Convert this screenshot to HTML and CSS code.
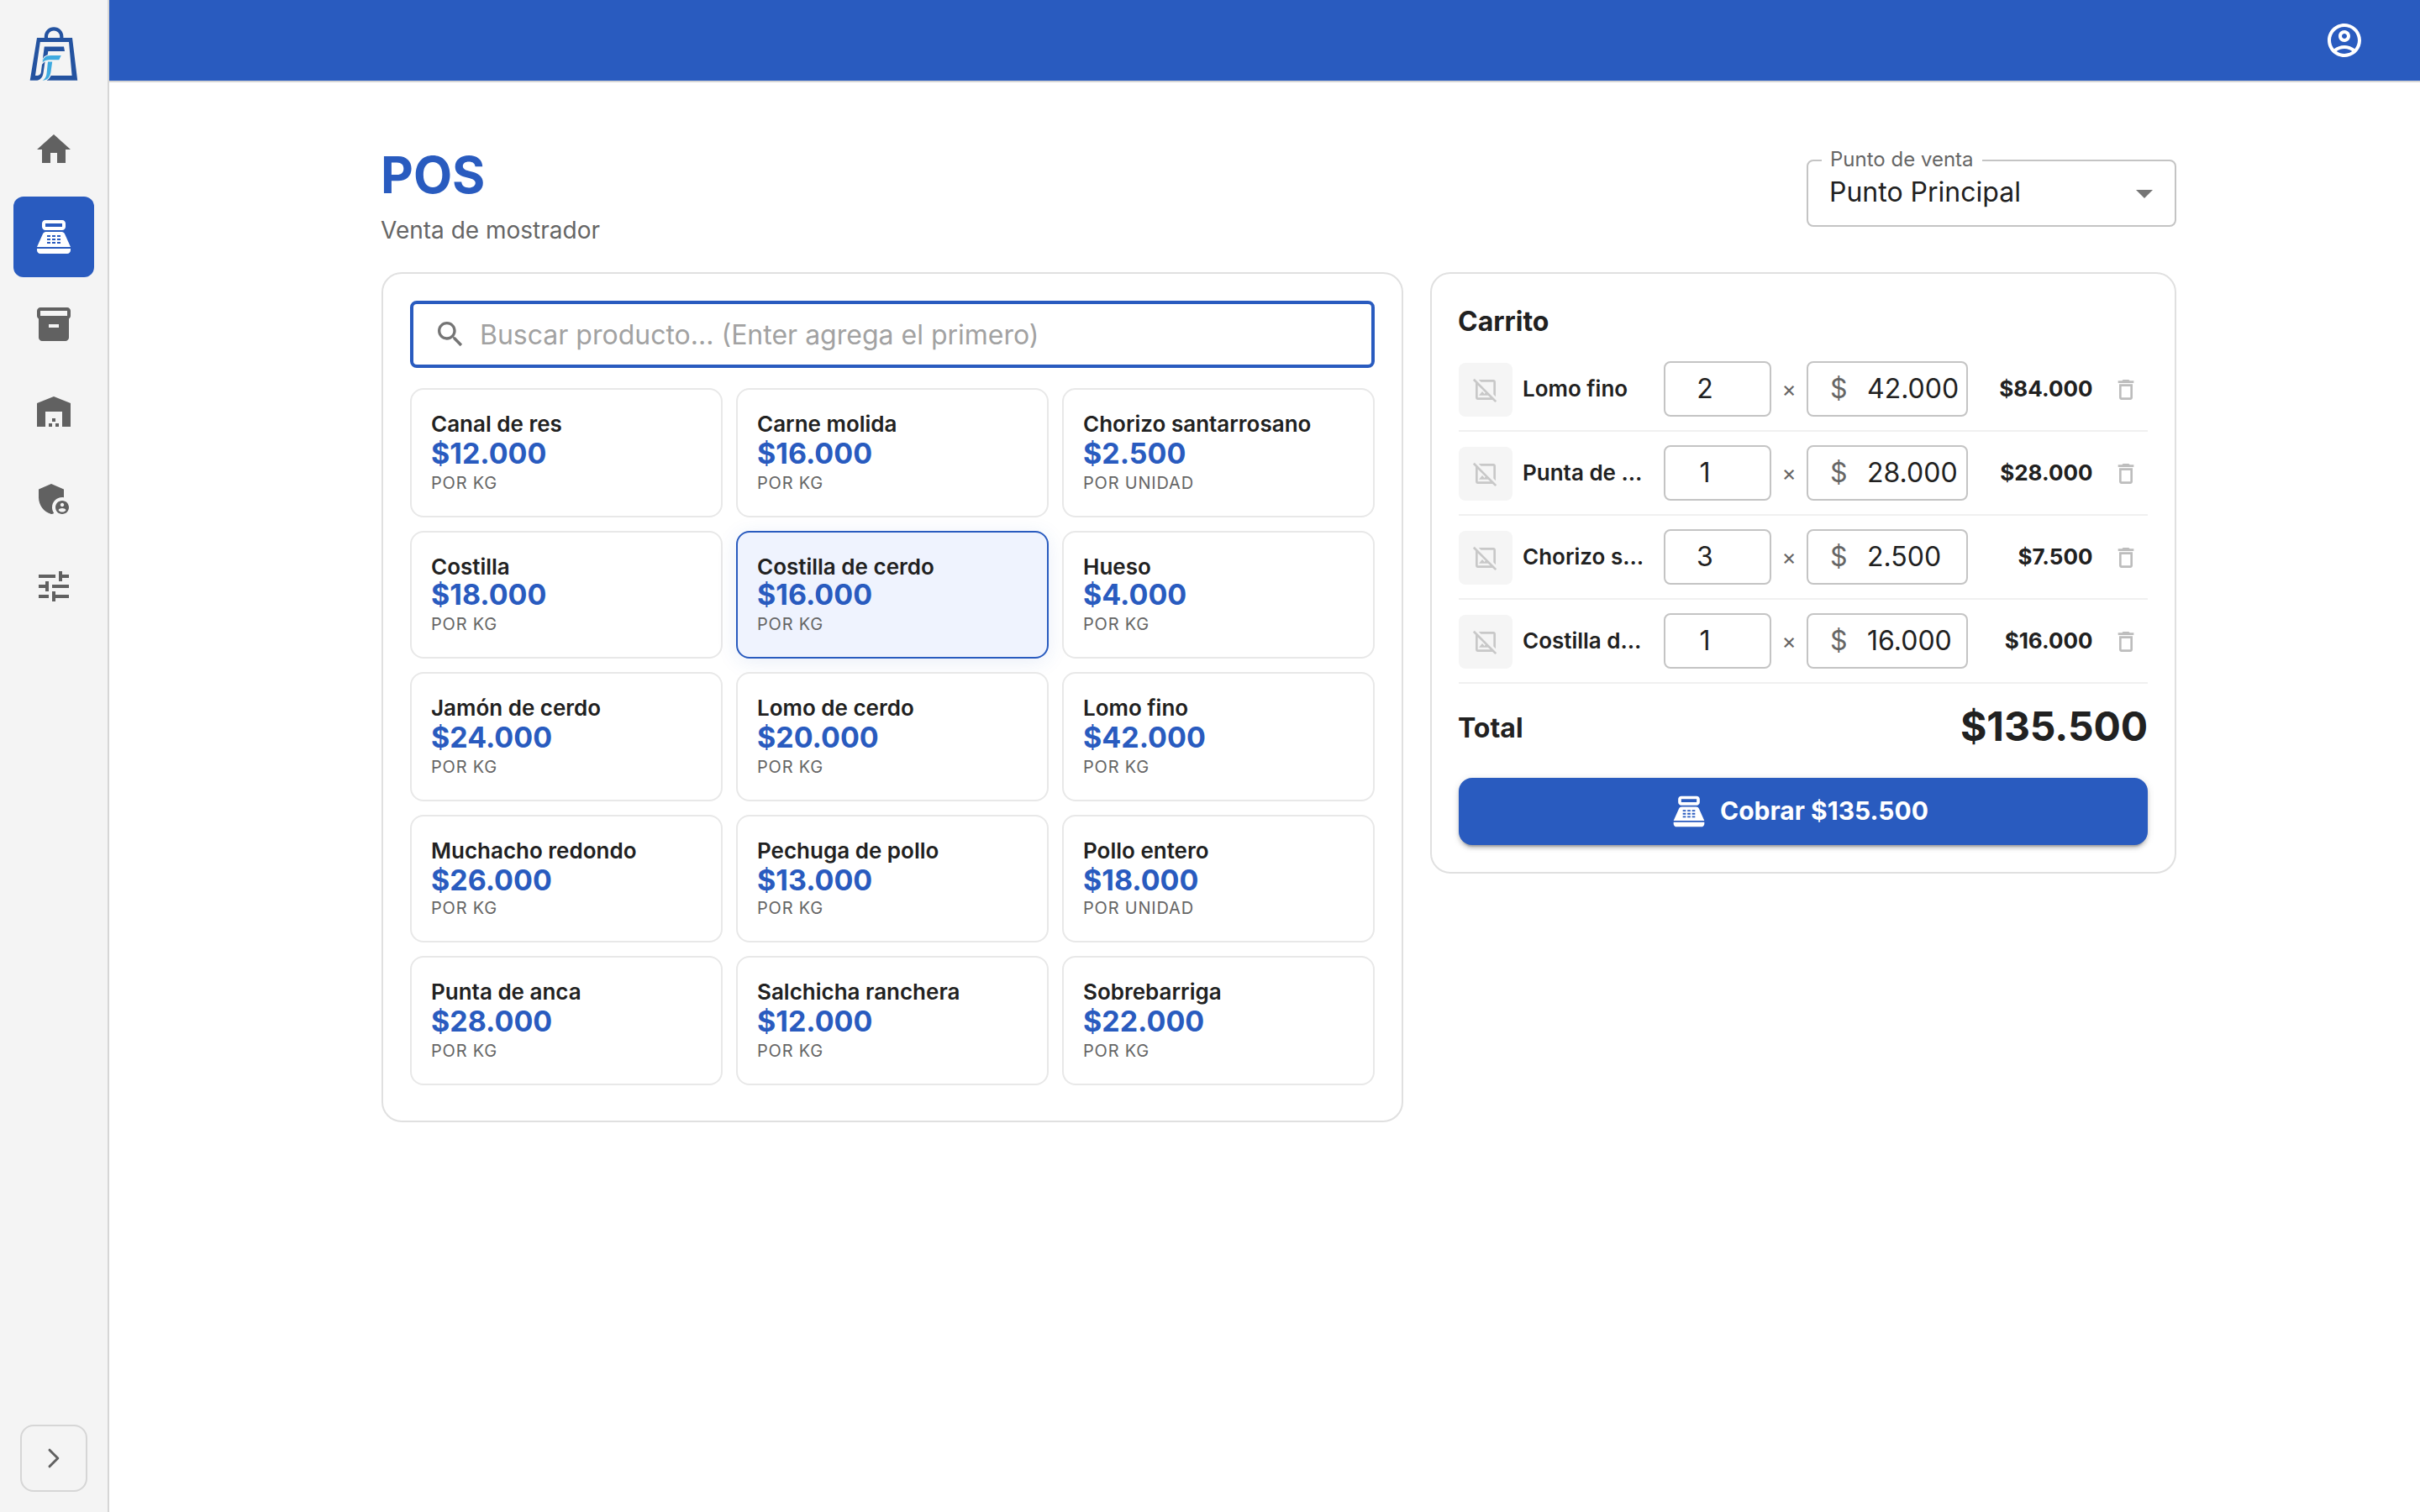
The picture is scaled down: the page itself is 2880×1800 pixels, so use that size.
FILE: index.html
```html
<!DOCTYPE html>
<html lang="es">
<head>
<meta charset="utf-8">
<title>POS</title>
<link rel="stylesheet" href="styles.css">
</head>
<body>
<svg class="sprite" aria-hidden="true">
  <symbol id="i-home" viewBox="0 0 24 24"><path d="M10 20v-6h4v6h5v-8h3L12 3 2 12h3v8z"/></symbol>
  <symbol id="i-pos" viewBox="0 0 24 24"><path fill-rule="evenodd" d="M17 2H7c-1.1 0-2 .9-2 2v2c0 1.1.9 2 2 2h10c1.1 0 2-.9 2-2V4c0-1.1-.9-2-2-2zm0 4H7V4h10v2zm3 16H4c-1.1 0-2-.9-2-2v-1h20v1c0 1.1-.9 2-2 2zM18.53 10.19C18.21 9.47 17.49 9 16.7 9H7.3c-.79 0-1.51.47-1.83 1.19L2 18h20l-3.47-7.81zM8 11h2v1H8zm3 0h2v1h-2zm3 0h2v1h-2zM8 13h2v1H8zm3 0h2v1h-2zm3 0h2v1h-2zM8 15h2v1H8zm3 0h2v1h-2zm3 0h2v1h-2z"/></symbol>
  <symbol id="i-inventory" viewBox="0 0 24 24"><path d="M20 2H4c-1 0-2 .9-2 2v3.01c0 .72.43 1.34 1 1.69V20c0 1.1 1.1 2 2 2h14c.9 0 2-.9 2-2V8.7c.57-.35 1-.97 1-1.69V4c0-1.1-1-2-2-2zm-5 12H9v-2h6v2zm5-7H4V4h16v3z"/></symbol>
  <symbol id="i-warehouse" viewBox="0 0 24 24"><path d="M22 21V7L12 3 2 7v14h5v-9h10v9h5zm-11-2H9v2h2v-2zm2-3h-2v2h2v-2zm2 3h-2v2h2v-2z"/></symbol>
  <symbol id="i-admin" viewBox="0 0 24 24"><path d="M17 11c.34 0 .67.04 1 .09V6.27L10.5 3 3 6.27v4.91c0 4.54 3.2 8.79 7.5 9.82.55-.13 1.08-.32 1.6-.55-.69-.98-1.1-2.17-1.1-3.45 0-3.31 2.69-6 6-6z"/><path d="M17 13c-2.21 0-4 1.79-4 4s1.79 4 4 4 4-1.79 4-4-1.79-4-4-4zm0 1.38c.62 0 1.12.51 1.12 1.12s-.51 1.12-1.12 1.12-1.12-.51-1.12-1.12.5-1.12 1.12-1.12zm0 5.37c-.93 0-1.74-.46-2.24-1.17.05-.72 1.51-1.08 2.24-1.08s2.19.36 2.24 1.08c-.5.71-1.31 1.17-2.24 1.17z"/></symbol>
  <symbol id="i-tune" viewBox="0 0 24 24"><path d="M3 17v2h6v-2H3zM3 5v2h10V5H3zm10 16v-2h8v-2h-8v-2h-2v6h2zM7 9v2H3v2h4v2h2V9H7zm14 4v-2H11v2h10zm-6-4h2V7h4V5h-4V3h-2v6z"/></symbol>
  <symbol id="i-account" viewBox="0 0 24 24"><path d="M12 2C6.48 2 2 6.48 2 12s4.48 10 10 10 10-4.48 10-10S17.52 2 12 2zM7.35 18.5C8.66 17.56 10.26 17 12 17s3.34.56 4.65 1.5c-1.31.94-2.91 1.5-4.65 1.5s-3.34-.56-4.65-1.5zm10.79-1.38C16.45 15.8 14.32 15 12 15s-4.45.8-6.14 2.12C4.7 15.73 4 13.95 4 12c0-4.42 3.58-8 8-8s8 3.58 8 8c0 1.95-.7 3.73-1.86 5.12z"/><path d="M12 6c-1.93 0-3.5 1.57-3.5 3.5S10.07 13 12 13s3.5-1.57 3.5-3.5S13.93 6 12 6zm0 5c-.83 0-1.5-.67-1.5-1.5S11.17 8 12 8s1.5.67 1.5 1.5S12.83 11 12 11z"/></symbol>
  <symbol id="i-search" viewBox="0 0 24 24"><path d="M15.5 14h-.79l-.28-.27C15.41 12.59 16 11.11 16 9.5 16 5.91 13.09 3 9.5 3S3 5.91 3 9.5 5.91 16 9.5 16c1.61 0 3.09-.59 4.23-1.57l.27.28v.79l5 4.99L20.49 19l-4.99-5zm-6 0C7.01 14 5 11.99 5 9.5S7.01 5 9.5 5 14 7.01 14 9.5 11.99 14 9.5 14z"/></symbol>
  <symbol id="i-noimage" viewBox="0 0 24 24"><path d="m21.9 21.9-8.49-8.49-9.82-9.82L2.1 2.1.69 3.51 3 5.83V19c0 1.1.9 2 2 2h13.17l2.31 2.31 1.42-1.41zM5 19V7.83l6.84 6.84-.84 1.05L9 13.5 6 17h8.17l2 2H5zM7.83 5l-2-2H19c1.1 0 2 .9 2 2v13.17l-2-2V5H7.83z"/></symbol>
  <symbol id="i-delete" viewBox="0 0 24 24"><path d="M6 19c0 1.1.9 2 2 2h8c1.1 0 2-.9 2-2V7H6v12zM8 9h8v10H8V9zm7.5-5-1-1h-5l-1 1H5v2h14V4h-3.5z"/></symbol>
  <symbol id="i-arrow" viewBox="0 0 24 24"><path d="m7 10 5 5 5-5z"/></symbol>
</svg>

<div class="app">
  <aside class="sidebar">
    <svg class="logo" viewBox="0 0 56 64">
      <path class="logo__handle" d="M18.900 15.500V11.500a9.200 9.200 0 0 1 18.400 0V15.500"/>
      <path class="logo__dark" d="M8 13H50L56.200 63.800H19.500L24.500 58H49.600L46 18H11.800L6 58H7.500C10.500 58 12.400 57 12.900 53.500L14.500 41 16.800 23.600H40L41 29H21.300L20.700 33.300 17.800 39.500 15.700 54C15 60.500 11.500 63.800 6.500 63.800H-.3z"/>
      <path class="logo__light" d="M14.700 42.500C15 37 18 34 24.500 34H36.700L34.300 39.300H24C19 39.300 16.500 40.500 14.700 42.500z"/>
      <path class="logo__light" d="M21 41.500H26.200L24.500 53.500C23.600 60 20.500 63.800 14.500 63.800C18.300 61.500 19.200 58.500 19.600 55z"/>
    </svg>
    <nav class="nav">
      <a class="nav__item"><svg><use href="#i-home"/></svg></a>
      <a class="nav__item nav__item--active"><svg><use href="#i-pos"/></svg></a>
      <a class="nav__item"><svg><use href="#i-inventory"/></svg></a>
      <a class="nav__item"><svg><use href="#i-warehouse"/></svg></a>
      <a class="nav__item"><svg><use href="#i-admin"/></svg></a>
      <a class="nav__item"><svg><use href="#i-tune"/></svg></a>
    </nav>
    <button class="collapse" aria-label="Expandir"><svg viewBox="0 0 40 40"><path d="M15 10.200 24.800 20 15 29.800"/></svg></button>
  </aside>

  <div class="page">
    <header class="topbar"><svg><use href="#i-account"/></svg></header>
    <main class="content">
      <div class="head">
        <div class="head__text">
          <h1 class="head__title">POS</h1>
          <p class="head__sub">Venta de mostrador</p>
        </div>
        <div class="select">
          <span class="select__label">Punto de venta</span>
          <span class="select__value">Punto Principal</span>
          <svg><use href="#i-arrow"/></svg>
        </div>
      </div>

      <div class="columns">
        <section class="card catalog">
          <div class="search">
            <svg><use href="#i-search"/></svg>
            <span class="search__placeholder">Buscar producto... (Enter agrega el primero)</span>
          </div>
          <div class="products">
            <div class="product"><div class="product__name">Canal de res</div><div class="product__price">$12.000</div><div class="product__unit">POR KG</div></div>
            <div class="product"><div class="product__name">Carne molida</div><div class="product__price">$16.000</div><div class="product__unit">POR KG</div></div>
            <div class="product"><div class="product__name">Chorizo santarrosano</div><div class="product__price">$2.500</div><div class="product__unit">POR UNIDAD</div></div>
            <div class="product product--tight"><div class="product__name">Costilla</div><div class="product__price">$18.000</div><div class="product__unit">POR KG</div></div>
            <div class="product product--tight product--selected"><div class="product__name">Costilla de cerdo</div><div class="product__price">$16.000</div><div class="product__unit">POR KG</div></div>
            <div class="product product--tight"><div class="product__name">Hueso</div><div class="product__price">$4.000</div><div class="product__unit">POR KG</div></div>
            <div class="product"><div class="product__name">Jamón de cerdo</div><div class="product__price">$24.000</div><div class="product__unit">POR KG</div></div>
            <div class="product"><div class="product__name">Lomo de cerdo</div><div class="product__price">$20.000</div><div class="product__unit">POR KG</div></div>
            <div class="product"><div class="product__name">Lomo fino</div><div class="product__price">$42.000</div><div class="product__unit">POR KG</div></div>
            <div class="product product--tight-unit"><div class="product__name">Muchacho redondo</div><div class="product__price">$26.000</div><div class="product__unit">POR KG</div></div>
            <div class="product product--tight-unit"><div class="product__name">Pechuga de pollo</div><div class="product__price">$13.000</div><div class="product__unit">POR KG</div></div>
            <div class="product product--tight-unit"><div class="product__name">Pollo entero</div><div class="product__price">$18.000</div><div class="product__unit">POR UNIDAD</div></div>
            <div class="product"><div class="product__name">Punta de anca</div><div class="product__price">$28.000</div><div class="product__unit">POR KG</div></div>
            <div class="product"><div class="product__name">Salchicha ranchera</div><div class="product__price">$12.000</div><div class="product__unit">POR KG</div></div>
            <div class="product"><div class="product__name">Sobrebarriga</div><div class="product__price">$22.000</div><div class="product__unit">POR KG</div></div>
          </div>
        </section>

        <section class="card cart">
          <h2 class="cart__title">Carrito</h2>
          <div class="line">
            <div class="line__thumb"><svg><use href="#i-noimage"/></svg></div>
            <div class="line__name">Lomo fino</div>
            <div class="field field--qty">2</div><span class="line__times">×</span>
            <div class="field field--price"><span class="field__sign">$</span>42.000</div>
            <div class="line__total">$84.000</div>
            <div class="line__delete"><svg><use href="#i-delete"/></svg></div>
          </div>
          <div class="line">
            <div class="line__thumb"><svg><use href="#i-noimage"/></svg></div>
            <div class="line__name">Punta de …</div>
            <div class="field field--qty">1</div><span class="line__times">×</span>
            <div class="field field--price"><span class="field__sign">$</span>28.000</div>
            <div class="line__total">$28.000</div>
            <div class="line__delete"><svg><use href="#i-delete"/></svg></div>
          </div>
          <div class="line">
            <div class="line__thumb"><svg><use href="#i-noimage"/></svg></div>
            <div class="line__name">Chorizo s…</div>
            <div class="field field--qty">3</div><span class="line__times">×</span>
            <div class="field field--price"><span class="field__sign">$</span>2.500</div>
            <div class="line__total">$7.500</div>
            <div class="line__delete"><svg><use href="#i-delete"/></svg></div>
          </div>
          <div class="line">
            <div class="line__thumb"><svg><use href="#i-noimage"/></svg></div>
            <div class="line__name">Costilla d…</div>
            <div class="field field--qty">1</div><span class="line__times">×</span>
            <div class="field field--price"><span class="field__sign">$</span>16.000</div>
            <div class="line__total">$16.000</div>
            <div class="line__delete"><svg><use href="#i-delete"/></svg></div>
          </div>
          <div class="total"><span class="total__label">Total</span><span class="total__amount">$135.500</span></div>
          <button class="pay"><svg><use href="#i-pos"/></svg><span class="pay__text">Cobrar $135.500</span></button>
        </section>
      </div>
    </main>
  </div>
</div>
</body>
</html>
```
FILE: styles.css
```css
:root {
  --blue: #295bbf;
  --ink: #212121;
  --muted: #666;
}
* { box-sizing: border-box; }
body {
  margin: 0;
  font-family: Inter, "Liberation Sans", sans-serif;
  color: var(--ink);
  background: #fff;
}
h1, h2, p { margin: 0; }
svg { display: block; fill: currentColor; flex: none; }
.sprite { display: none; }
.app { display: flex; height: 1800px; overflow: hidden; }

/* Sidebar */
.sidebar {
  width: 130px;
  flex: none;
  display: flex;
  flex-direction: column;
  padding: 32px 16px 24px;
  background: #f4f4f4;
  border-right: 2px solid #d6d6d6;
}
.logo { width: 56px; height: 64px; margin-left: 20px; overflow: visible; }
.logo__dark { fill: #2453a0; }
.logo__handle { fill: none; stroke: #2453a0; stroke-width: 4.2; }
.logo__light { fill: #3eaae0; stroke: #f4f4f4; stroke-width: 2; paint-order: stroke; }
.nav { display: flex; flex-direction: column; gap: 8px; margin-top: 34px; }
.nav__item {
  width: 96px;
  height: 96px;
  display: grid;
  place-items: center;
  border-radius: 12px;
  color: #616161;
}
.nav__item svg { width: 48px; height: 48px; }
.nav__item--active { background: var(--blue); color: #fff; }
.collapse {
  width: 80px;
  height: 80px;
  margin: auto 0 0 8px;
  padding: 0;
  display: grid;
  place-items: center;
  border: 2px solid #d6d6d6;
  border-radius: 16px;
  background: transparent;
  color: #616161;
}
.collapse svg {
  width: 40px;
  height: 40px;
  fill: none;
  stroke: currentColor;
  stroke-width: 3;
  stroke-linecap: round;
  stroke-linejoin: round;
}

/* Page frame */
.page { flex: 1; min-width: 0; }
.topbar {
  height: 98px;
  display: flex;
  align-items: center;
  justify-content: flex-end;
  padding-right: 66px;
  background: var(--blue);
  border-bottom: 2px solid #d6d6d6;
  color: #fff;
}
.topbar svg { width: 48px; height: 48px; }
.content { width: 2460px; padding: 74px 0 0 324px; }
.head { display: flex; justify-content: space-between; height: 152px; }
.head__text { margin-left: -1px; }
.head__title { font-size: 60px; line-height: 72px; font-weight: 700; color: var(--blue); }
.head__sub { margin-top: 13px; font-size: 28px; line-height: 34px; color: var(--muted); }
.select {
  position: relative;
  display: flex;
  width: 440px;
  height: 80px;
  margin-top: 18px;
  padding: 14px 12px 0 25px;
  border: 2px solid #c4c4c4;
  border-radius: 8px;
}
.select__label {
  position: absolute;
  left: 16px;
  top: -17px;
  padding: 0 10px;
  font-size: 24px;
  line-height: 29px;
  color: var(--muted);
  background: #fff;
}
.select__value { flex: 1; margin-top: 3px; font-size: 32px; line-height: 39px; }
.select svg { width: 48px; height: 48px; color: #757575; }

/* Cards */
.columns { display: flex; align-items: flex-start; gap: 32px; }
.card { border: 2px solid #e0e0e0; border-radius: 24px; padding: 32px; }
.catalog { width: 1216px; height: 1012px; }
.search {
  display: flex;
  align-items: center;
  gap: 15px;
  height: 80px;
  padding: 0 24px;
  border: 4px solid var(--blue);
  border-radius: 8px;
}
.search svg { width: 40px; height: 40px; color: #757575; }
.search__placeholder { padding-top: 2px; font-size: 32px; line-height: 40px; color: #a2a2a2; }
.products {
  display: grid;
  grid-template-columns: repeat(3, 1fr);
  grid-template-rows: 154px 152px 154px 152px 154px;
  gap: 16px;
  margin-top: 24px;
}
.product { padding: 22px 23px; border: 2px solid #e8e8e8; border-radius: 16px; background: #fff; }
.product__name { font-size: 26px; line-height: 37px; font-weight: 600; }
.product__price { font-size: 34px; line-height: 33px; font-weight: 700; color: var(--blue); }
.product__unit { margin-top: 6px; font-size: 20px; line-height: 26px; letter-spacing: .8px; color: var(--muted); }
.product--tight .product__price { margin-top: -2px; }
.product--tight-unit .product__unit { margin-top: 4px; }
.product--selected {
  background: #eff3fe;
  border-color: var(--blue);
  box-shadow: 0 4px 24px rgba(41, 91, 191, .1);
}

/* Cart */
.cart { width: 888px; height: 716px; }
.cart__title { margin: 0 0 7px -1px; font-size: 32px; line-height: 49px; font-weight: 700; }
.line {
  display: flex;
  align-items: center;
  gap: 12px;
  height: 100px;
  border-bottom: 2px solid #f0f0f0;
}
.line__thumb {
  width: 64px;
  height: 64px;
  margin-top: 2px;
  display: grid;
  place-items: center;
  flex: none;
  border-radius: 8px;
  background: #f5f5f5;
  color: #c8c8c8;
}
.line__thumb svg, .line__delete svg { width: 32px; height: 32px; }
.line__name {
  flex: 1;
  min-width: 0;
  white-space: nowrap;
  font-size: 26px;
  line-height: 32px;
  font-weight: 600;
}
.field {
  display: flex;
  flex: none;
  height: 66px;
  font-size: 32px;
  line-height: 62px;
  border: 2px solid #c4c4c4;
  border-radius: 8px;
}
.field--qty { width: 128px; justify-content: center; padding-right: 30px; }
.field--price { width: 192px; padding-left: 26px; }
.field__sign { width: 44px; color: var(--muted); }
.line__times { width: 18px; text-align: center; font-size: 26px; line-height: 32px; color: var(--muted); }
.line__total { width: 138px; padding-right: 1.5px; text-align: right; font-size: 26px; line-height: 32px; font-weight: 700; }
.line__delete { padding: 10px; color: #bdbdbd; }
.line__delete svg { margin-top: 2px; }
.total { display: flex; justify-content: space-between; height: 112px; margin-left: -1px; }
.total__label { padding-top: 33px; font-size: 32px; line-height: 39px; font-weight: 700; }
.total__amount { padding-top: 21px; font-size: 48px; line-height: 59px; font-weight: 700; letter-spacing: -.1px; }
.pay {
  display: flex;
  align-items: center;
  justify-content: center;
  gap: 15px;
  width: 100%;
  height: 80px;
  padding: 0 9px 0 0;
  border: 0;
  border-radius: 16px;
  background: var(--blue);
  color: #fff;
  font: 700 30px/38px Inter, "Liberation Sans", sans-serif;
  box-shadow: 0 6px 2px -4px rgba(0, 0, 0, .2), 0 4px 4px rgba(0, 0, 0, .14), 0 2px 10px rgba(0, 0, 0, .12);
}
.pay svg { width: 44px; height: 44px; }
.pay__text { padding-bottom: 2px; }
```
